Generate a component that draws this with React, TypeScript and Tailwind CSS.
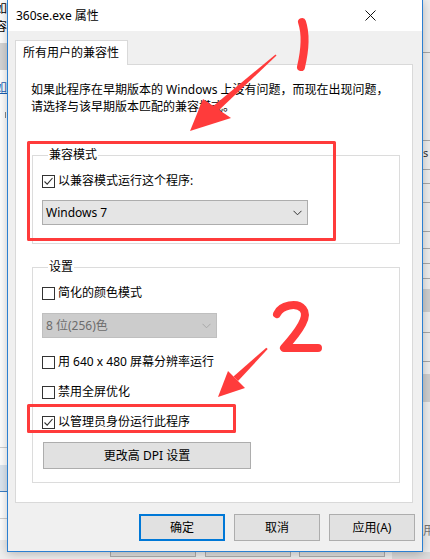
import type { ReactNode } from "react";

const Check = ({ checked }: { checked?: boolean }) => (
  <span className="flex h-[13px] w-[13px] shrink-0 items-center justify-center border border-[#333333] bg-white">
    {checked && (
      <svg width="11" height="11" viewBox="0 0 11 11">
        <path d="M1.5 5.5 L4.2 8.2 L9.5 2" fill="none" stroke="#333333" strokeWidth="1.1" />
      </svg>
    )}
  </span>
);

const CheckRow = ({ label, checked, className = "" }: { label: string; checked?: boolean; className?: string }) => (
  <div className={`flex h-4 items-center gap-[3px] text-xs leading-4 ${className}`}>
    <Check checked={checked} />
    <span>{label}</span>
  </div>
);

const Chevron = ({ color }: { color: string }) => (
  <svg width="9" height="6" viewBox="0 0 9 6">
    <path d="M0.5 0.8 L4.5 4.8 L8.5 0.8" fill="none" stroke={color} strokeWidth="1" />
  </svg>
);

const Group = ({ title, className = "", children }: { title: string; className?: string; children: ReactNode }) => (
  <fieldset className={`ml-[16px] w-[368px] border border-[#dcdcdc] px-[9px] ${className}`}>
    <legend className="ml-[6px] px-px text-xs leading-4">{title}</legend>
    {children}
  </fieldset>
);

const Btn = ({ label, primary }: { label: string; primary?: boolean }) => (
  <button
    className={`flex h-[27px] w-[86px] items-center justify-center bg-[#e1e1e1] text-xs ${
      primary ? "border-2 border-[#0078d7]" : "border border-[#adadad]"
    }`}
  >
    {label}
  </button>
);

const Backdrop = () => (
  <div className="absolute inset-0 bg-[#f0f0f0]">
    {/* left window strip */}
    <div className="absolute left-0 top-0 h-[540px] w-[8px] bg-white">
      <div className="absolute left-[-5px] top-0 text-xs leading-[17px] text-black">如</div>
      <div className="absolute left-[-5px] top-[18px] text-xs leading-[17px] text-black">容</div>
      <div className="absolute left-0 top-[43px] h-[27px] w-[8px] bg-[#d6d6d6]" />
      <div className="absolute left-[-5px] top-[80px] text-xs leading-4 text-[#1a5fb4] underline">如</div>
      <div className="absolute left-[5px] top-[112px] h-[6px] w-px bg-[#888]" />
      <div className="absolute left-0 top-[447px] h-px w-[8px] bg-[#cfcfcf]" />
      <div className="absolute left-0 top-[465px] h-[27px] w-[8px] border-b border-[#3c7fc4] bg-[#dde7f1]" />
      <div className="absolute left-0 top-[518px] h-px w-[8px] bg-[#cfcfcf]" />
    </div>
    {/* right window strip */}
    <div className="absolute right-0 top-0 h-[559px] w-[8px] bg-[#efefef]">
      {[52, 140, 169, 183, 202, 231, 248, 263, 278, 332, 361].map((y) => (
        <div key={y} className="absolute left-0 h-px w-[8px] bg-[#a8a8a8]" style={{ top: y }} />
      ))}
      <div className="absolute left-0 top-[289px] h-[23px] w-[8px] bg-[#cfcfcf]" />
      <div className="absolute left-0 top-[374px] h-[28px] w-[8px] bg-[#cfcfcf]" />
      <div className="absolute left-[1px] top-[145px] text-[11px] leading-4 text-[#333]">s</div>
      <div className="absolute left-[1px] top-[523px] text-xs leading-4 text-[#777]">用</div>
    </div>
    {/* bottom window strip */}
    <div className="absolute bottom-0 left-0 flex h-[7px] w-[430px] bg-[#f0f0f0]">
      <div className="ml-[110px] h-[5px] w-[86px] border border-t-0 border-[#adadad] bg-[#e1e1e1]" />
      <div className="ml-[9px] h-[5px] w-[86px] border border-t-0 border-[#adadad] bg-[#e1e1e1]" />
      <div className="ml-[8px] h-[5px] w-[86px] border border-t-0 border-[#adadad] bg-[#e1e1e1]" />
      <div className="ml-[7px] h-[7px] flex-1 bg-[#dcdcdc]" />
    </div>
  </div>
);

const Marks = () => (
  <svg className="pointer-events-none absolute left-0 top-0" width="430" height="559" viewBox="0 0 430 559">
    <g fill="none" stroke="#ff3b3b" strokeLinecap="round" strokeLinejoin="round">
      <rect x="28.5" y="142.5" width="306" height="97" strokeWidth="3" />
      <rect x="28.5" y="405.5" width="206" height="26" strokeWidth="3" />
      <path d="M302 22 C 306 34, 305 50, 301 67" strokeWidth="8" />
      <path d="M277 314 C 281 305, 297 302, 303 309 C 309 316, 301 329, 284 348 L 318 348" strokeWidth="8" />
    </g>
    <g fill="#ff3b3b">
      <polygon points="275.5,54.4 276.5,55.6 216.5,112.5 211.5,107.5" />
      <polygon points="190,131 203,99 231,118" />
      <polygon points="266.3,347.7 267.7,349.1 238,381 233.5,376.5" />
      <polygon points="218,397 228,371 245,388" />
    </g>
  </svg>
);

const App = () => {
  return (
    <div className="relative h-[559px] w-[430px] overflow-hidden font-[family-name:'Noto_Sans','Noto_Sans_CJK_SC',sans-serif] text-black">
      <Backdrop />

      <div className="absolute left-[7px] top-[-1px] flex h-[553px] w-[416px] flex-col border border-[#2b7fd1] bg-[#f0f0f0] shadow-[0_2px_10px_rgba(0,0,0,0.25)]">
        <div className="flex h-[31px] shrink-0 items-center justify-between bg-white pl-[8px] pr-[46px]">
          <span className="text-xs leading-4">360se.exe 属性</span>
          <svg width="11" height="11" viewBox="0 0 11 11">
            <path d="M0.5 0.5 L10.5 10.5 M10.5 0.5 L0.5 10.5" stroke="#111" strokeWidth="1" />
          </svg>
        </div>

        <div className="flex flex-1 flex-col pl-[7px] pr-[9px] pt-[9px]">
          <div className="relative z-10 -mb-px flex h-[25px] w-[113px] items-center border border-b-0 border-[#d9d9d9] bg-white pl-[7px] text-xs leading-4">
            所有用户的兼容性
          </div>

          <div className="flex h-[439px] flex-col border border-[#d9d9d9] bg-white">
            <p className="ml-[15px] pt-[16px] text-xs leading-[17px]">
              如果此程序在早期版本的 Windows 上没有问题，而现在出现问题，
              <br />
              请选择与该早期版本匹配的兼容模式。
            </p>

            <Group title="兼容模式" className="mt-[32px] pb-[18px]">
              <CheckRow label="以兼容模式运行这个程序:" checked className="mt-[10px]" />
              <div className="mt-[11px] flex h-[25px] w-[266px] items-center justify-between border border-[#adadad] bg-[#e5e5e5] pl-[3px] pr-[5px] text-xs">
                <span>Windows 7</span>
                <Chevron color="#333333" />
              </div>
            </Group>

            <Group title="设置" className="mt-[15px] pb-[13px]">
              <CheckRow label="简化的颜色模式" className="mt-[10px]" />
              <div className="mt-[12px] flex h-[25px] w-[175px] items-center justify-between border border-[#bfbfbf] bg-[#cccccc] pl-[3px] pr-[5px] text-xs text-[#6d6d6d]">
                <span>8 位(256)色</span>
                <Chevron color="#a8a8a8" />
              </div>
              <CheckRow label="用 640 x 480 屏幕分辨率运行" className="mt-[16px]" />
              <CheckRow label="禁用全屏优化" className="mt-[14px]" />
              <CheckRow label="以管理员身份运行此程序" checked className="mt-[14px]" />
              <button className="ml-px mt-[12px] flex h-[27px] w-[208px] items-center justify-center border border-[#adadad] bg-[#e1e1e1] text-xs">
                更改高 DPI 设置
              </button>
            </Group>
          </div>

          <div className="-mr-[2px] mt-[11px] flex justify-end gap-[9px]">
            <Btn label="确定" primary />
            <Btn label="取消" />
            <Btn label="应用(A)" />
          </div>
        </div>
      </div>

      <Marks />
    </div>
  );
};

export default App;
